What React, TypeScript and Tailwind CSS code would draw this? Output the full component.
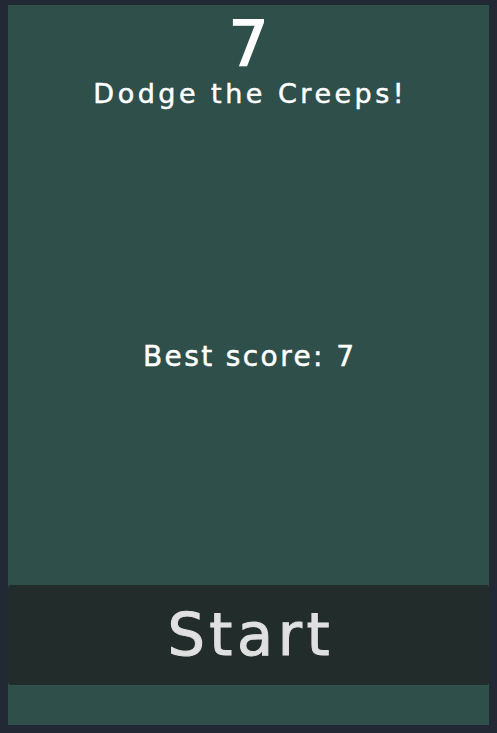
export default function App() {
  const font = { fontFamily: '"DejaVu Sans", "Liberation Sans", sans-serif' };
  return (
    <div className="min-h-screen w-full bg-[#232934] px-[8px] pt-[5px] pb-[8px]" style={font}>
      <div className="flex h-[720px] flex-col bg-[#2e4f4a] text-white">
        <div className="flex flex-col items-center pt-[8px]">
          <div className="text-[63px] leading-[62px] text-white [-webkit-text-stroke:1.5px_currentColor]">7</div>
          <div className="mt-[3px] pl-[3.5px] text-[27px] leading-[32px] tracking-[3.5px] text-white [-webkit-text-stroke:0.5px_currentColor]">Dodge the Creeps!</div>
        </div>
        <div className="flex flex-1 items-center justify-center pt-[18px]">
          <div className="pl-[2.4px] text-[28px] leading-[32px] tracking-[2.4px] text-white [-webkit-text-stroke:0.5px_currentColor]">Best score: 7</div>
        </div>
        <button className="mb-[40px] flex h-[100px] items-center justify-center rounded-[3px] bg-[#222d2b] pl-[4.5px] text-[59px] tracking-[4.5px] text-[#e0e0e0] [-webkit-text-stroke:1px_currentColor]">
          Start
        </button>
      </div>
    </div>
  );
}
